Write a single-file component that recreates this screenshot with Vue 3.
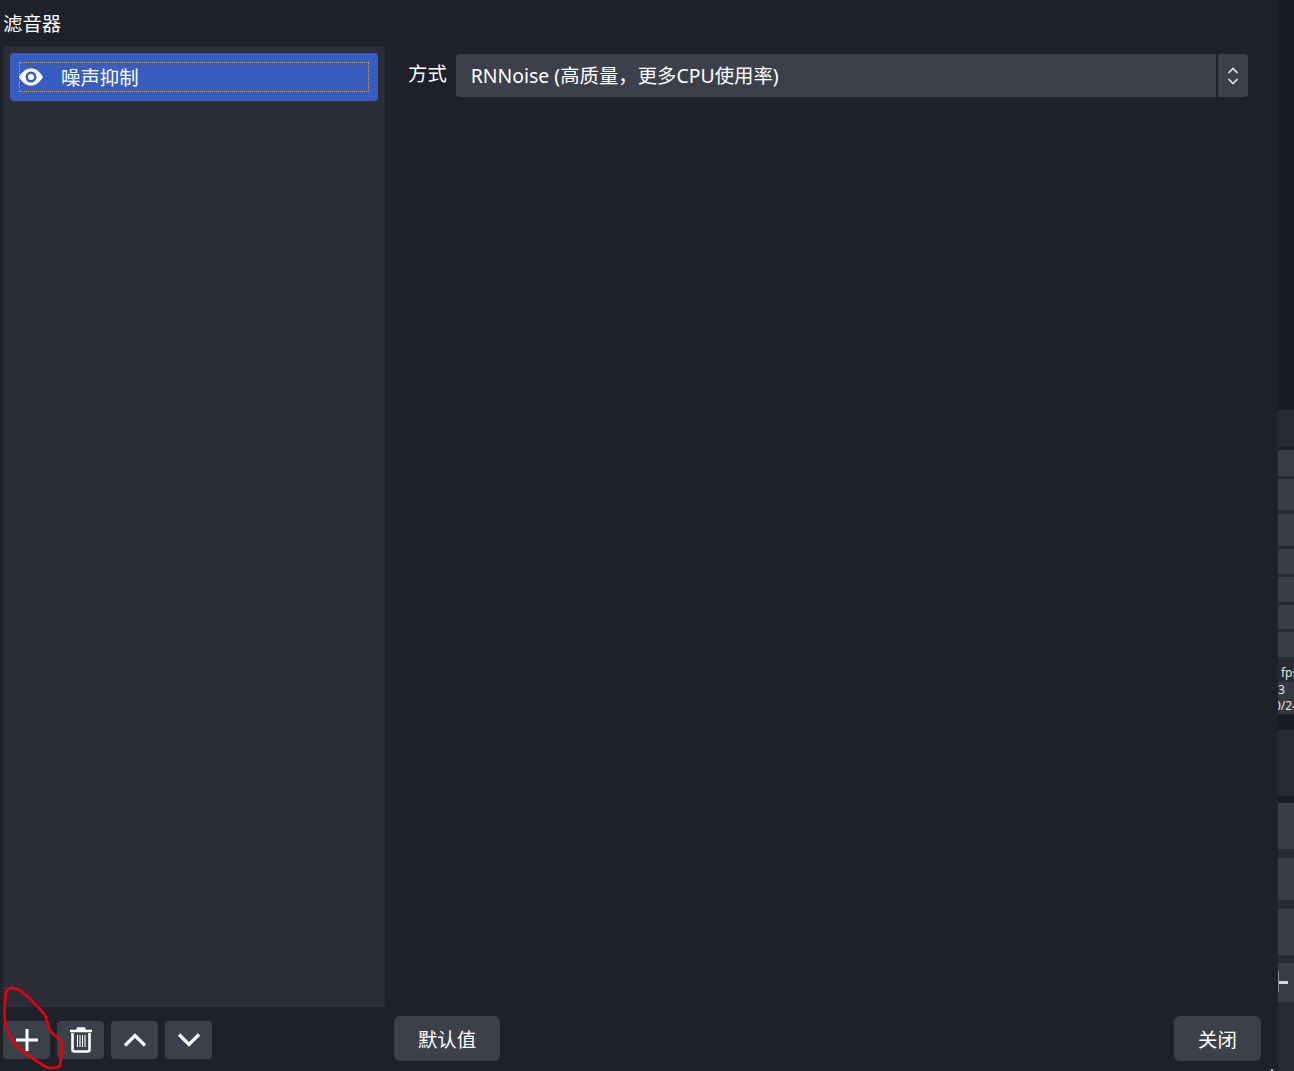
<script setup>
const stripRows = [
  { h: 410, c: '#1a1c25' },
  { h: 37, c: '#272a33' },
  { h: 3, c: '#1e2028' },
  { h: 26, c: '#3a3d48' },
  { h: 3, c: '#272a33' },
  { h: 31, c: '#3a3d48' },
  { h: 4, c: '#272a33' },
  { h: 32, c: '#3a3d48' },
  { h: 3, c: '#272a33' },
  { h: 25, c: '#3a3d48' },
  { h: 3, c: '#272a33' },
  { h: 25, c: '#3a3d48' },
  { h: 3, c: '#272a33' },
  { h: 24, c: '#3a3d48' },
  { h: 3, c: '#272a33' },
  { h: 25, c: '#3a3d48' },
  { h: 8, c: '#272a33' },
]
const stripLower = [
  { h: 16, c: '#1a1c25' },
  { h: 66, c: '#272a33' },
  { h: 7, c: '#1a1c25' },
  { h: 46, c: '#3a3d48' },
  { h: 9, c: '#272a33' },
  { h: 42, c: '#3a3d48' },
  { h: 9, c: '#272a33' },
  { h: 46, c: '#3a3d48' },
  { h: 8, c: '#272a33' },
  { h: 39, c: '#3a3d48' },
  { h: 69, c: '#272a33' },
]
</script>

<template>
  <div class="screen">
    <div class="dialog">
      <div class="title">滤音器</div>
      <div class="main">
        <div class="left">
          <div class="filter-list">
            <div class="filter-item">
              <div class="focus-box">
                <svg class="eye" width="24" height="18" viewBox="0 0 24 18">
                  <path d="M0 9C3.500 3 7.500 0.500 12 0.500S20.500 3 24 9C20.500 15 16.500 17.500 12 17.500S3.500 15 0 9Z" fill="#fff" />
                  <circle cx="12" cy="9" r="5.500" fill="#385dc0" />
                  <circle cx="12" cy="9" r="3" fill="#fff" />
                </svg>
                <span class="filter-name">噪声抑制</span>
              </div>
            </div>
          </div>
          <div class="tool-row">
            <button class="tool-btn">
              <svg width="24" height="24" viewBox="0 0 24 24">
                <path d="M12 1V23M1 12H23" stroke="#fff" stroke-width="3" fill="none" />
              </svg>
            </button>
            <button class="tool-btn">
              <svg width="24" height="26" viewBox="0 0 24 26">
                <path d="M1 4H23M8 3.500L9 1.500H15L16 3.500" stroke="#fff" stroke-width="2.600" fill="none" />
                <path d="M3.500 6V22.500Q3.500 24.500 5.500 24.500H18.500Q20.500 24.500 20.500 22.500V6" stroke="#fff" stroke-width="2.600" fill="none" />
                <path d="M8.500 8V20M11 8V20M13.500 8V20M16 8V20" stroke="#fff" stroke-width="1.100" fill="none" />
              </svg>
            </button>
            <button class="tool-btn">
              <svg width="24" height="14" viewBox="0 0 24 14">
                <path d="M2 12.500L12 2.500L22 12.500" stroke="#fff" stroke-width="3.200" fill="none" />
              </svg>
            </button>
            <button class="tool-btn">
              <svg width="24" height="14" viewBox="0 0 24 14">
                <path d="M2 1.500L12 11.500L22 1.500" stroke="#fff" stroke-width="3.200" fill="none" />
              </svg>
            </button>
          </div>
        </div>
        <div class="right">
          <div class="prop-row">
            <span class="prop-label">方式</span>
            <div class="select">
              <span class="select-text">RNNoise (高质量，更多CPU使用率)</span>
              <span class="select-arrows">
                <svg width="12" height="20" viewBox="0 0 12 20">
                  <path d="M1.500 7L6 2.500L10.500 7M1.500 13L6 17.500L10.500 13" stroke="#e6e6e6" stroke-width="1.600" fill="none" />
                </svg>
              </span>
            </div>
          </div>
          <div class="action-row">
            <button class="action-btn default-btn">默认值</button>
            <button class="action-btn close-btn">关闭</button>
          </div>
        </div>
      </div>
    </div>
    <div class="strip">
      <div v-for="(row, i) in stripRows" :key="i" :style="{ height: row.h + 'px', background: row.c }"></div>
      <div class="strip-text fps">0 fps</div>
      <div class="strip-text stats">
        <div>3</div>
        <div class="stats-line">0/24</div>
      </div>
      <div class="strip-lower">
        <div v-for="(row, i) in stripLower" :key="i" :style="{ height: row.h + 'px', background: row.c }"></div>
        <span class="strip-plus"></span>
        <span class="strip-plus-stem"></span>
      </div>
    </div>
    <svg class="scribble" width="70" height="90" viewBox="0 980 70 90">
      <path
        d="M6 993C7 989 10 987 13 988C19 989 24 993 28 997C34 1003 41 1010 45 1015C47 1021 48 1027 51 1032C55 1036 60 1039 62 1043C62 1050 61 1060 60 1066C56 1069 50 1068 46 1067C39 1063 33 1059 28 1055C22 1051 16 1046 12 1040C8 1034 5 1027 5 1020C4 1011 5 1000 6 993Z"
        stroke="#e8000b"
        stroke-width="2.600"
        fill="none"
      />
    </svg>
    <span class="corner-dot"></span>
  </div>
</template>

<style scoped>
.screen {
  position: relative;
  display: flex;
  width: 1294px;
  height: 1071px;
  overflow: hidden;
  background: #1e212a;
  font-family: "Noto Sans", "Noto Sans CJK SC", sans-serif;
  color: #fff;
}

.dialog {
  display: flex;
  flex-direction: column;
  width: 1278px;
  height: 1071px;
  background: #1e212a;
}

.title {
  height: 46px;
  padding: 10px 0 0 3px;
  box-sizing: border-box;
  font-size: 19.4px;
  line-height: 28px;
}

.main {
  display: flex;
  flex: 1;
  min-height: 0;
}

.left {
  display: flex;
  flex-direction: column;
  width: 382px;
  margin-left: 3px;
}

.filter-list {
  height: 961px;
  padding: 7px;
  box-sizing: border-box;
  background: #2b2e38;
  border-radius: 4px;
}

.filter-item {
  height: 48px;
  padding: 9px;
  box-sizing: border-box;
  background: #385dc0;
  border-radius: 4px;
}

.focus-box {
  display: flex;
  align-items: center;
  height: 30px;
  box-sizing: border-box;
  border: 1px dotted #e0a030;
}

.eye {
  flex: none;
  margin-left: -1px;
}

.filter-name {
  margin-top: 2px;
  margin-left: 18px;
  font-size: 19.4px;
  line-height: 28px;
}

.tool-row {
  display: flex;
  gap: 7px;
  margin-top: 14px;
}

.tool-btn {
  display: flex;
  align-items: center;
  justify-content: center;
  width: 47px;
  height: 38px;
  padding: 0;
  border: none;
  border-radius: 4px;
  background: #3c404b;
}

.right {
  display: flex;
  flex: 1;
  flex-direction: column;
  justify-content: space-between;
  min-width: 0;
  padding-left: 9px;
}

.prop-row {
  display: flex;
  align-items: center;
  gap: 9px;
  margin-top: 8px;
  margin-left: 14px;
  margin-right: 30px;
}

.prop-label {
  margin-top: -3px;
  font-size: 19.4px;
  line-height: 28px;
}

.select {
  display: flex;
  flex: 1;
  align-items: center;
  height: 43px;
  background: #3c404b;
  border-radius: 4px;
}

.select-text {
  flex: 1;
  padding-left: 15px;
  font-size: 19.4px;
  line-height: 28px;
}

.select-arrows {
  display: flex;
  align-items: center;
  justify-content: center;
  width: 30px;
  height: 43px;
  border-left: 2px solid #1e212a;
}

.action-row {
  display: flex;
  justify-content: space-between;
  margin-bottom: 10px;
  margin-right: 17px;
}

.action-btn {
  height: 45px;
  padding: 0;
  border: none;
  border-radius: 6px;
  background: #3c404b;
  color: #fff;
  font-family: inherit;
  font-size: 19.4px;
}

.default-btn {
  width: 106px;
}

.close-btn {
  width: 87px;
}

.strip {
  position: relative;
  width: 16px;
  overflow: hidden;
  background: #272a33;
}

.strip-text {
  width: 40px;
  font-size: 12px;
  color: #e4e4e4;
  white-space: nowrap;
}

.fps {
  height: 17px;
  margin-left: -7px;
  line-height: 15px;
  background: #272a33;
}

.stats {
  height: 32px;
  line-height: 16px;
  background: #35383f;
}

.stats-line {
  margin-left: -4px;
}

.strip-lower {
  position: relative;
}

.strip-plus {
  position: absolute;
  left: 0;
  top: 267px;
  width: 10px;
  height: 3px;
  background: #d8d8d8;
}

.strip-plus-stem {
  position: absolute;
  left: 0;
  top: 257px;
  width: 1px;
  height: 21px;
  background: #8a8a8a;
}

.scribble {
  position: absolute;
  left: 0;
  top: 980px;
}

.corner-dot {
  position: absolute;
  left: 1271px;
  top: 1069px;
  width: 2px;
  height: 2px;
  background: #c8c8c8;
}
</style>
